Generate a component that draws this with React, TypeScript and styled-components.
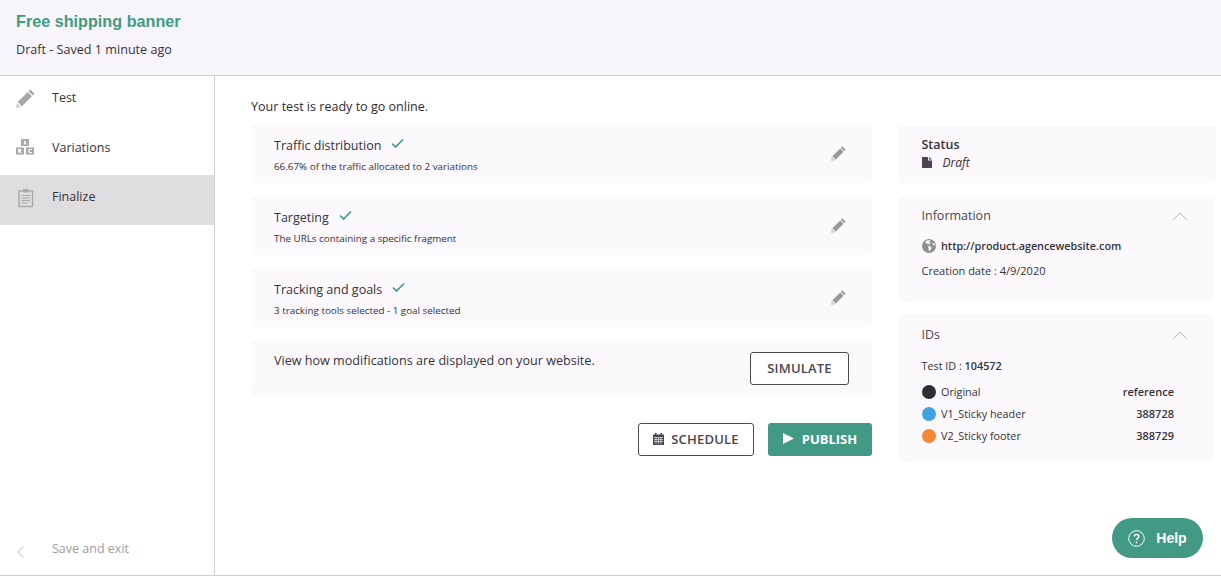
import React from 'react';
import styled, { createGlobalStyle } from 'styled-components';

const GlobalStyle = createGlobalStyle`
  html, body {
    margin: 0;
    padding: 0;
    background: #fff;
    font-family: "Open Sans", "Liberation Sans", sans-serif;
    color: #2f2a33;
    overflow: hidden;
  }
  * { box-sizing: border-box; }
`;

const Page = styled.div`
  width: 1221px;
  height: 576px;
  position: relative;
  display: flex;
  flex-direction: column;
  border-bottom: 1px solid #cfcfcf;
`;

const Header = styled.header`
  height: 76px;
  flex: none;
  background: #f7f5f9;
  border-bottom: 1px solid #cfcfcf;
  padding: 11px 16px 0;
`;

const BannerTitle = styled.h1`
  margin: 0;
  font: bold 16.2px/20px "Liberation Sans", Arial, sans-serif;
  color: #429a85;
`;

const SavedNote = styled.p`
  margin: 10px 0 0;
  font-size: 12.6px;
  line-height: 18px;
  color: #37323a;
`;

const Body = styled.div`
  flex: 1;
  display: flex;
  min-height: 0;
`;

const Sidebar = styled.nav`
  width: 215px;
  flex: none;
  border-right: 1px solid #cfcfcf;
  display: flex;
  flex-direction: column;
`;

const NavItem = styled.div<{ $active?: boolean }>`
  height: 49.5px;
  display: flex;
  align-items: flex-start;
  padding: 13px 0 0 16px;
  font-size: 12.5px;
  line-height: 18px;
  color: #37323a;
  background: ${p => (p.$active ? '#dfdde0' : 'transparent')};
`;

const NavIcon = styled.span<{ $inset?: number }>`
  width: 36px;
  flex: none;
  display: flex;
  padding-left: ${p => p.$inset ?? 0}px;
  color: #a8a8a8;
`;

const SaveExit = styled.div`
  margin-top: auto;
  height: 49px;
  display: flex;
  padding: 14px 0 0 16px;
  font-size: 12.5px;
  line-height: 18px;
  color: #a09ea3;
`;

const Main = styled.main`
  flex: 1;
  display: grid;
  grid-template-columns: 620px 317px;
  column-gap: 27px;
  padding: 22px 0 0 37px;
  align-content: start;
  align-items: start;
`;

const Intro = styled.p`
  grid-column: 1 / -1;
  margin: 0 0 9px -1px;
  font-size: 12.55px;
  line-height: 18px;
  color: #2f2a33;
`;

const LeftColumn = styled.div`
  display: flex;
  flex-direction: column;
  gap: 14px;
`;

const RightColumn = styled.aside`
  display: flex;
  flex-direction: column;
  padding-top: 1px;
`;

const StepCard = styled.section`
  height: 58px;
  background: #fbf9fc;
  border-radius: 3px;
  padding: 11px 22px 0;
  display: flex;
  justify-content: space-between;
`;

const StepTitle = styled.div`
  display: flex;
  align-items: flex-start;
  gap: 10px;
  font-size: 12.5px;
  line-height: 20px;
  color: #37323a;
`;

const StepText = styled.div`
  font-size: 9.83px;
  line-height: 14px;
  margin-top: 3px;
  color: #37323a;
`;

const EditButton = styled.span`
  margin: 10px 4px 0 0;
  color: #9a9a9a;
  display: flex;
`;

const SimulateCard = styled.section`
  height: 55px;
  background: #fbf9fc;
  border-radius: 3px;
  padding: 11px 23px 0 22px;
  display: flex;
  justify-content: space-between;
  font-size: 12.6px;
  line-height: 18px;
  color: #37323a;
`;

const OutlineButton = styled.button`
  height: 33px;
  border: 1px solid #4a4a4a;
  border-radius: 3px;
  background: #fff;
  font: 600 13px "Open Sans", sans-serif;
  letter-spacing: 0.2px;
  color: #4b4650;
  display: inline-flex;
  align-items: center;
  justify-content: center;
  gap: 7px;
  padding: 0 0 2px;
`;

const SimulateButton = styled(OutlineButton)`
  width: 99px;
`;

const ScheduleButton = styled(OutlineButton)`
  width: 116px;
`;

const PublishButton = styled.button`
  width: 104px;
  height: 33px;
  border: 0;
  border-radius: 3px;
  background: #429a85;
  color: #fff;
  font: 700 13px "Open Sans", sans-serif;
  display: inline-flex;
  align-items: center;
  justify-content: center;
  gap: 8px;
  padding: 0 0 2px;
`;

const Actions = styled.div`
  display: flex;
  justify-content: flex-end;
  gap: 14px;
  margin-top: 13px;
`;

const SideCard = styled.section<{ $narrow?: boolean }>`
  background: #fbf9fc;
  border-radius: 3px;
  padding: 10px 0 0 22.5px;
  margin-right: ${p => (p.$narrow ? '3px' : '0')};
`;

const StatusCard = styled(SideCard)`
  height: 57px;
  margin-bottom: 14px;
`;

const InfoCard = styled(SideCard)`
  height: 105px;
  margin-bottom: 12px;
`;

const IdsCard = styled(SideCard)`
  height: 148px;
  padding-top: 12px;
`;

const SideTitle = styled.div`
  font-size: 12.5px;
  line-height: 17px;
  font-weight: 600;
  color: #37323a;
`;

const SideHeading = styled.div`
  display: flex;
  justify-content: space-between;
  font-size: 12.5px;
  line-height: 18px;
  color: #4b4650;
  padding-right: 25px;
`;

const Chevron = styled.span`
  display: flex;
  margin-top: 5px;
  color: #b5b5b5;
`;

const StatusRow = styled.div`
  display: flex;
  align-items: center;
  gap: 11px;
  margin-top: 1px;
  font-size: 12px;
  line-height: 17px;
  font-style: italic;
  color: #37323a;
`;

const LinkRow = styled.div`
  display: flex;
  align-items: center;
  gap: 5.5px;
  margin-top: 13px;
  font-size: 10.8px;
  font-weight: 600;
  line-height: 16px;
  color: #37323a;
`;

const InfoLine = styled.div`
  margin-top: 9px;
  font-size: 11px;
  line-height: 16px;
  color: #37323a;
`;

const TestId = styled.div`
  margin-top: 14px;
  font-size: 10.8px;
  line-height: 16px;
  color: #37323a;

  b { font-weight: 600; }
`;

const VariationList = styled.div`
  margin-top: 10px;
  padding-right: 39px;
  display: flex;
  flex-direction: column;
  gap: 6px;
`;

const VariationRow = styled.div`
  display: flex;
  align-items: center;
  height: 16px;
  font-size: 10.8px;
  line-height: 16px;
  color: #37323a;
`;

const Dot = styled.span<{ $color: string }>`
  width: 14px;
  height: 14px;
  border-radius: 50%;
  background: ${p => p.$color};
  margin-right: 5.5px;
  flex: none;
`;

const VariationId = styled.span`
  margin-left: auto;
  font-size: 11px;
  font-weight: 600;
`;

const HelpButton = styled.button`
  position: absolute;
  right: 18px;
  bottom: 17px;
  width: 91px;
  height: 40px;
  border: 0;
  border-radius: 20px;
  background: #429a85;
  color: #fff;
  font: bold 14px "Liberation Sans", Arial, sans-serif;
  display: flex;
  align-items: center;
  justify-content: center;
  gap: 11px;
  padding: 0;
`;

const Pencil = ({ size = 16 }: { size?: number }) => (
  <svg width={size} height={size} viewBox="0 0 18 18" fill="currentColor">
    <path d="M13.6 0.4 L17.6 4.4 L15.9 6.1 L11.9 2.1 Z" />
    <path d="M11.1 2.9 L15.1 6.9 L5.6 16.4 L1.6 12.4 Z" />
    <path d="M1 13.4 L4.6 17 L0 18 Z" fill="#c9c9c9" />
  </svg>
);

const BlocksIcon = () => (
  <svg width="18" height="16" viewBox="0 0 18 16" fill="currentColor">
    <path fillRule="evenodd" d="M5 0h8v7H5zM7.6 5.4h1l.3-.9h.3l.3.9h1L9.4 1.6h-.8z" />
    <path fillRule="evenodd" d="M0 8.500h8v7H0zM2 10v4h1.200v-1.400L4.700 14H6l-1.400-1.600c1.200-.6 1-2.400-.6-2.400z" />
    <path fillRule="evenodd" d="M10 8.500h8v7h-8zM16 10h-2.500c-1.500 0-1.500 4 0 4H16v-1h-2c-.5 0-.5-2 0-2h2z" />
  </svg>
);

const ClipboardIcon = () => (
  <svg width="16" height="20" viewBox="0 0 16 20" fill="none" stroke="currentColor">
    <rect x="1" y="3" width="13.500" height="15.500" strokeWidth="1.400" />
    <rect x="5" y="1" width="5.500" height="3.500" fill="currentColor" stroke="none" />
    <path d="M3.500 7.500h8.500M3.500 10h8.500M3.500 12.500h8.500M3.500 15h6" strokeWidth="1" />
  </svg>
);

const CheckMark = () => (
  <svg width="13" height="11" viewBox="0 0 13 11" fill="none" stroke="#429a85" strokeWidth="1.600" style={{ marginTop: 2 }}>
    <path d="M1 5.500 L4.500 9 L12 1.500" />
  </svg>
);

const ChevronUp = () => (
  <svg width="16" height="9" viewBox="0 0 16 9" fill="none" stroke="currentColor" strokeWidth="1">
    <path d="M1 8 L8 1 L15 8" />
  </svg>
);

const ChevronLeft = () => (
  <svg width="8" height="12" viewBox="0 0 8 12" fill="none" stroke="#b5b5b5" strokeWidth="1" style={{ marginTop: 6 }}>
    <path d="M7 1 L1.500 6 L7 11" />
  </svg>
);

const FileIcon = () => (
  <svg width="10" height="11" viewBox="0 0 10 11" fill="#4b4650">
    <path d="M0 0h6v3.500h4V11H0z" />
    <path d="M7 0l3 2.600H7z" />
  </svg>
);

const GlobeIcon = () => (
  <svg width="14" height="14" viewBox="0 0 14 14">
    <circle cx="7" cy="7" r="7" fill="#8f8f8f" />
    <path d="M5 1.200 L8.500 1 L7.500 3 L9 4 L7 5.500 L4.500 4.500 L3 3 Z M6 7 L9.500 7.500 L9 10.500 L7 12.500 L6.500 9.500 Z M11 3.500 L13 5.500 L12.500 7 L10.500 5.500 Z" fill="#f2f2f2" />
  </svg>
);

const CalendarIcon = () => (
  <svg width="11" height="12" viewBox="0 0 11 12" fill="#4b4650">
    <path d="M2 0h1.500v1.500h4V0H9v1.500h2V12H0V1.500h2z" />
    <path d="M1 4.500h9M1 6.500h9M1 8.500h9M3 4v7M5.500 4v7M8 4v7" stroke="#fff" strokeWidth="0.600" />
  </svg>
);

const PlayIcon = () => (
  <svg width="11" height="11" viewBox="0 0 11 11" fill="#fff">
    <path d="M0 0 L11 5.500 L0 11 Z" />
  </svg>
);

const HelpIcon = () => (
  <svg width="17" height="17" viewBox="0 0 17 17" fill="none" stroke="#fff">
    <circle cx="8.500" cy="8.500" r="7.800" strokeWidth="1" />
    <path d="M6.300 6.600c0-3 4.500-3 4.500 0 0 1.800-2.300 1.700-2.300 3.500" strokeWidth="1.400" />
    <circle cx="8.500" cy="12.400" r="0.900" fill="#fff" stroke="none" />
  </svg>
);

const steps = [
  { title: 'Traffic distribution', text: '66.67% of the traffic allocated to 2 variations' },
  { title: 'Targeting', text: 'The URLs containing a specific fragment' },
  { title: 'Tracking and goals', text: '3 tracking tools selected - 1 goal selected' },
];

const variations = [
  { name: 'Original', id: 'reference', color: '#2f2e33' },
  { name: 'V1_Sticky header', id: '388728', color: '#3fa2e3' },
  { name: 'V2_Sticky footer', id: '388729', color: '#f58634' },
];

export default function App() {
  return (
    <Page>
      <GlobalStyle />
      <Header>
        <BannerTitle>Free shipping banner</BannerTitle>
        <SavedNote>Draft - Saved 1 minute ago</SavedNote>
      </Header>
      <Body>
        <Sidebar>
          <NavItem>
            <NavIcon><Pencil size={19} /></NavIcon>
            Test
          </NavItem>
          <NavItem>
            <NavIcon><BlocksIcon /></NavIcon>
            Variations
          </NavItem>
          <NavItem $active>
            <NavIcon $inset={2}><ClipboardIcon /></NavIcon>
            Finalize
          </NavItem>
          <SaveExit>
            <NavIcon><ChevronLeft /></NavIcon>
            Save and exit
          </SaveExit>
        </Sidebar>
        <Main>
          <Intro>Your test is ready to go online.</Intro>
          <LeftColumn>
            {steps.map(step => (
              <StepCard key={step.title}>
                <div>
                  <StepTitle>{step.title} <CheckMark /></StepTitle>
                  <StepText>{step.text}</StepText>
                </div>
                <EditButton><Pencil size={15} /></EditButton>
              </StepCard>
            ))}
            <SimulateCard>
              View how modifications are displayed on your website.
              <SimulateButton>SIMULATE</SimulateButton>
            </SimulateCard>
            <Actions>
              <ScheduleButton><CalendarIcon /> SCHEDULE</ScheduleButton>
              <PublishButton><PlayIcon /> PUBLISH</PublishButton>
            </Actions>
          </LeftColumn>
          <RightColumn>
            <StatusCard>
              <SideTitle>Status</SideTitle>
              <StatusRow><FileIcon /> Draft</StatusRow>
            </StatusCard>
            <InfoCard $narrow>
              <SideHeading>
                Information
                <Chevron><ChevronUp /></Chevron>
              </SideHeading>
              <LinkRow><GlobeIcon /> http://product.agencewebsite.com</LinkRow>
              <InfoLine>Creation date : 4/9/2020</InfoLine>
            </InfoCard>
            <IdsCard $narrow>
              <SideHeading>
                IDs
                <Chevron><ChevronUp /></Chevron>
              </SideHeading>
              <TestId>Test ID : <b>104572</b></TestId>
              <VariationList>
                {variations.map(v => (
                  <VariationRow key={v.name}>
                    <Dot $color={v.color} />
                    {v.name}
                    <VariationId>{v.id}</VariationId>
                  </VariationRow>
                ))}
              </VariationList>
            </IdsCard>
          </RightColumn>
        </Main>
      </Body>
      <HelpButton><HelpIcon /> Help</HelpButton>
    </Page>
  );
}
